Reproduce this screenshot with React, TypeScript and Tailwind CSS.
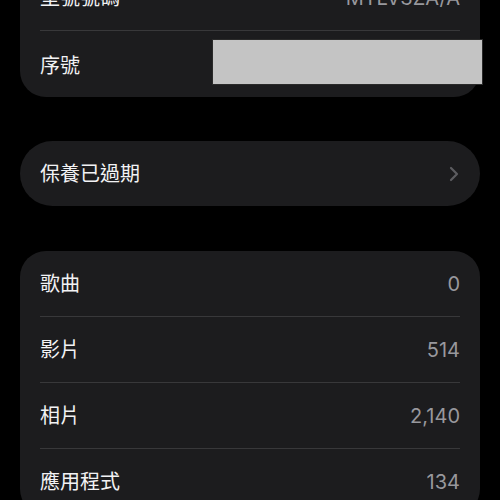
import React from "react";

const font = { fontFamily: '"Inter", "Noto Sans CJK TC", sans-serif' };

function Row({ label, value, divider, low }: { label: string; value?: string; divider?: boolean; low?: boolean }) {
  return (
    <div className={`relative h-[66px] flex items-center justify-between pl-5 pr-5 ${low ? "pt-[3px]" : ""}`}>
      <span className="text-[20px] text-[#f2f2f4]">{label}</span>
      {value !== undefined && <span className="text-[20px] text-[#98989d]">{value}</span>}
      {divider && <div className="absolute left-5 right-5 bottom-0 h-px bg-[#38383a]" />}
    </div>
  );
}

export default function App() {
  return (
    <div className="w-[500px] h-[500px] overflow-hidden bg-black" style={font}>
      <div className="px-5 flex flex-col gap-[45px]">
        <div className="-mt-[35px] rounded-[26px] bg-[#1c1c1e]">
          <Row label="型號號碼" value="MTLV3ZA/A" divider />
          <div className="relative">
            <Row label="序號" low />
            <div className="absolute left-[192px] top-[8px] w-[271px] h-[46px] bg-[#c4c4c4] border border-[#2a2a2a]" />
          </div>
        </div>
        <div className="-mt-px rounded-[33px] bg-[#1c1c1e] h-[65px] flex items-center justify-between pl-5 pr-[21px]">
          <span className="text-[20px] text-[#f2f2f4]">保養已過期</span>
          <svg width="10" height="16" viewBox="0 0 10 16" fill="none">
            <path d="M2 2l6 6-6 6" stroke="#5c5c60" strokeWidth="2.2" strokeLinecap="round" strokeLinejoin="round" />
          </svg>
        </div>
        <div className="rounded-[26px] bg-[#1c1c1e]">
          <Row label="歌曲" value="0" divider />
          <Row label="影片" value="514" divider />
          <Row label="相片" value="2,140" divider />
          <Row label="應用程式" value="134" />
        </div>
      </div>
    </div>
  );
}
